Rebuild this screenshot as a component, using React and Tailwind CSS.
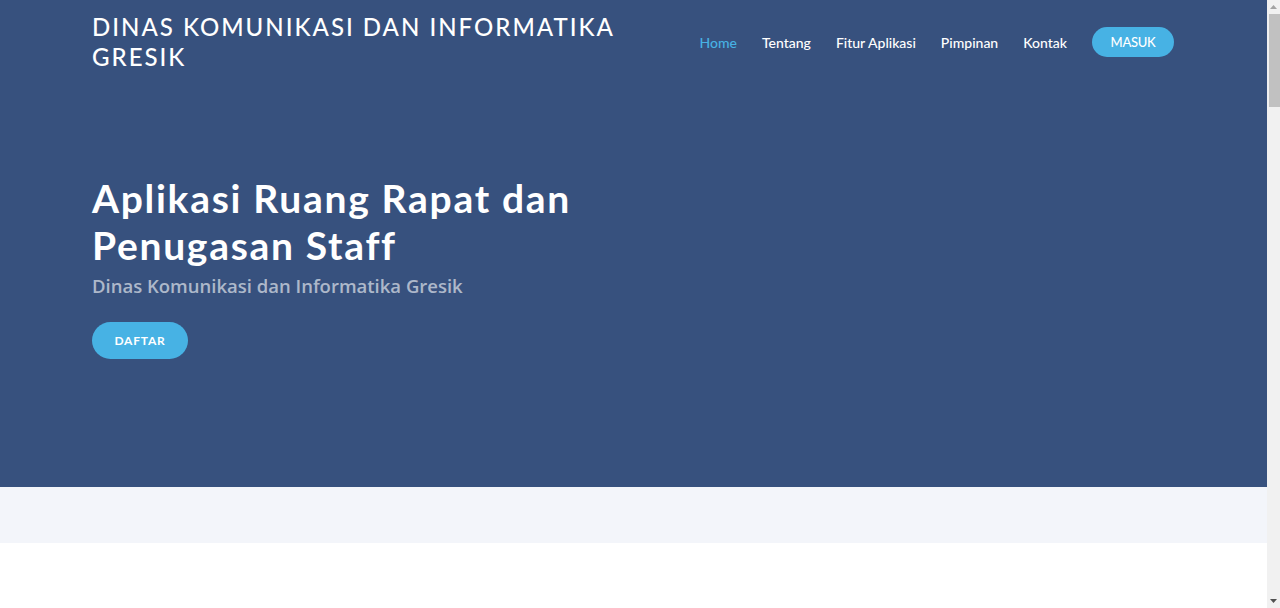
import React from "react";

function FakeScrollbar() {
  return (
    <div className="flex h-[608px] w-[13px] shrink-0 flex-col items-center bg-[#f1f1f1]">
      <div className="flex h-[13px] w-full items-center justify-center pt-[1px]">
        <svg width="7" height="4" viewBox="0 0 7 4">
          <polygon points="3.5,0 7,4 0,4" fill="#a3a3a3" />
        </svg>
      </div>
      <div className="ml-[1px] mt-[1px] h-[93px] w-[11px] bg-[#c1c1c1]" />
      <div className="flex-1" />
      <div className="flex h-[13px] w-full items-center justify-center pb-[2px]">
        <svg width="7" height="4" viewBox="0 0 7 4">
          <polygon points="0,0 7,0 3.5,4" fill="#505050" />
        </svg>
      </div>
    </div>
  );
}

export default function App() {
  const nav = ["Home", "Tentang", "Fitur Aplikasi", "Pimpinan", "Kontak"];
  return (
    <div className="flex h-[608px] overflow-hidden bg-white">
      <div className="min-w-0 flex-1 font-['Open_Sans',sans-serif]">
        <section className="flex h-[487px] flex-col bg-[#37517e]">
          <header className="flex items-center justify-between pl-[92px] pr-[93px] pt-[12px]">
            <h1 className="w-[540px] font-['Lato',sans-serif] text-[24px] leading-[30px] font-medium tracking-[2px] uppercase text-white">
              Dinas Komunikasi dan Informatika Gresik
            </h1>
            <nav className="flex items-center gap-[25px] font-['Lato',sans-serif] text-[14px] font-medium">
              {nav.map((n, i) => (
                <a key={n} className={i === 0 ? "text-[#47b2e4]" : "text-white"}>
                  {n}
                </a>
              ))}
              <a className="flex h-[30px] w-[82px] items-center justify-center rounded-full bg-[#47b2e4] pt-[1px] text-[13px] tracking-[-0.3px] text-white">
                MASUK
              </a>
            </nav>
          </header>
          <div className="pl-[92px] pt-[103px]">
            <h2 className="font-['Lato',sans-serif] text-[39px] leading-[47px] font-bold tracking-[1.7px] text-white">
              Aplikasi Ruang Rapat dan
              <br />
              Penugasan Staff
            </h2>
            <p className="mt-[4px] text-[18.5px] leading-[26px] font-semibold text-white/60">
              Dinas Komunikasi dan Informatika Gresik
            </p>
            <a className="mt-[23px] flex h-[37px] w-[96px] items-center justify-center rounded-full bg-[#47b2e4] font-['Lato',sans-serif] text-[12px] font-bold tracking-[0.8px] text-white">
              DAFTAR
            </a>
          </div>
        </section>
        <section className="h-[56px] bg-[#f3f5fa]" />
        <section className="h-[1000px] bg-white" />
      </div>
      <FakeScrollbar />
    </div>
  );
}
